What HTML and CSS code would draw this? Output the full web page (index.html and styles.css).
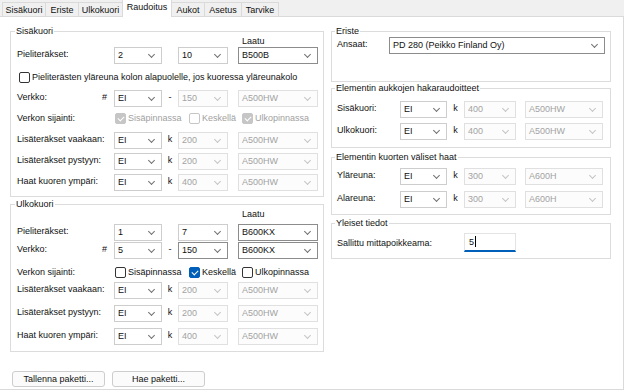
FILE: index.html
```html
<!DOCTYPE html>
<html lang="fi">
  <head>
    <meta charset="UTF-8" />
    <title>Raudoitus</title>
    <link rel="stylesheet" href="styles.css">
  </head>
  <body>
    <div class="tabs">
      <div class="tab">Sisäkuori</div>
      <div class="tab">Eriste</div>
      <div class="tab">Ulkokuori</div>
      <div class="tab active">Raudoitus</div>
      <div class="tab">Aukot</div>
      <div class="tab">Asetus</div>
      <div class="tab">Tarvike</div>
    </div>

    <div class="panel">
      <!-- left column: inner and outer shell -->
      <div class="col-left">
        <fieldset class="group sisa">
          <legend>Sisäkuori</legend>
          <div class="row laatu-row"><span class="laatu">Laatu</span></div>
          <div class="row r-piel">
            <span class="label">Pieliteräkset:</span><span class="mark"></span>
            <div class="combo c1">2</div><span class="sep"></span>
            <div class="combo c2">10</div>
            <div class="combo c3 dark">B500B</div>
          </div>
          <div class="row check-row">
            <span class="box"></span>
            <span class="check-text">Pieliterästen yläreuna kolon alapuolelle, jos kuoressa yläreunakolo</span>
          </div>
          <div class="row r-verkko">
            <span class="label">Verkko:</span><span class="mark">#</span>
            <div class="combo c1">EI</div><span class="sep">-</span>
            <div class="combo c2 off">150</div>
            <div class="combo c3 off">A500HW</div>
          </div>
          <div class="row place-row">
            <span class="label wide">Verkon sijainti:</span>
            <span class="opt o1 dis"><span class="box dis on"></span>Sisäpinnassa</span>
            <span class="opt o2 dis"><span class="box dis"></span>Keskellä</span>
            <span class="opt o3 dis"><span class="box dis on"></span>Ulkopinnassa</span>
          </div>
          <div class="row r-extra">
            <span class="label">Lisäteräkset vaakaan:</span><span class="mark"></span>
            <div class="combo c1">EI</div><span class="sep">k</span>
            <div class="combo c2 off">200</div>
            <div class="combo c3 off">A500HW</div>
          </div>
          <div class="row r-extra2">
            <span class="label">Lisäteräkset pystyyn:</span><span class="mark"></span>
            <div class="combo c1">EI</div><span class="sep">k</span>
            <div class="combo c2 off">200</div>
            <div class="combo c3 off">A500HW</div>
          </div>
          <div class="row r-extra2">
            <span class="label">Haat kuoren ympäri:</span><span class="mark"></span>
            <div class="combo c1">EI</div><span class="sep">k</span>
            <div class="combo c2 off">400</div>
            <div class="combo c3 off">A500HW</div>
          </div>
        </fieldset>

        <fieldset class="group ulko">
          <legend>Ulkokuori</legend>
          <div class="row laatu-row"><span class="laatu">Laatu</span></div>
          <div class="row u-piel">
            <span class="label">Pieliteräkset:</span><span class="mark"></span>
            <div class="combo c1">1</div><span class="sep"></span>
            <div class="combo c2">7</div>
            <div class="combo c3 dark">B600KX</div>
          </div>
          <div class="row u-verkko">
            <span class="label">Verkko:</span><span class="mark">#</span>
            <div class="combo c1">5</div><span class="sep">-</span>
            <div class="combo c2 dark">150</div>
            <div class="combo c3 dark">B600KX</div>
          </div>
          <div class="row place-row u-place">
            <span class="label wide">Verkon sijainti:</span>
            <span class="opt o1"><span class="box"></span>Sisäpinnassa</span>
            <span class="opt o2"><span class="box on"></span>Keskellä</span>
            <span class="opt o3"><span class="box"></span>Ulkopinnassa</span>
          </div>
          <div class="row u-extra">
            <span class="label">Lisäteräkset vaakaan:</span><span class="mark"></span>
            <div class="combo c1">EI</div><span class="sep">k</span>
            <div class="combo c2 off">200</div>
            <div class="combo c3 off">A500HW</div>
          </div>
          <div class="row u-extra2">
            <span class="label">Lisäteräkset pystyyn:</span><span class="mark"></span>
            <div class="combo c1">EI</div><span class="sep">k</span>
            <div class="combo c2 off">200</div>
            <div class="combo c3 off">A500HW</div>
          </div>
          <div class="row u-extra2">
            <span class="label">Haat kuoren ympäri:</span><span class="mark"></span>
            <div class="combo c1">EI</div><span class="sep">k</span>
            <div class="combo c2 off">400</div>
            <div class="combo c3 off">A500HW</div>
          </div>
        </fieldset>

        <div class="buttons">
          <div class="btn">Tallenna paketti...</div>
          <div class="btn">Hae paketti...</div>
        </div>
      </div>

      <!-- right column -->
      <div class="col-right">
        <fieldset class="group eriste">
          <legend>Eriste</legend>
          <div class="row e-row">
            <span class="label">Ansaat:</span>
            <div class="combo wide-combo dark">PD 280 (Peikko Finland Oy)</div>
          </div>
        </fieldset>

        <fieldset class="group aukot">
          <legend>Elementin aukkojen hakaraudoitteet</legend>
          <div class="row a-row1">
            <span class="label">Sisäkuori:</span>
            <div class="combo c1">EI</div><span class="sep">k</span>
            <div class="combo c2 off">400</div>
            <div class="combo c3 off">A500HW</div>
          </div>
          <div class="row a-row2">
            <span class="label">Ulkokuori:</span>
            <div class="combo c1">EI</div><span class="sep">k</span>
            <div class="combo c2 off">400</div>
            <div class="combo c3 off">A500HW</div>
          </div>
        </fieldset>

        <fieldset class="group haat">
          <legend>Elementin kuorten väliset haat</legend>
          <div class="row h-row">
            <span class="label">Yläreuna:</span>
            <div class="combo c1">EI</div><span class="sep">k</span>
            <div class="combo c2 off">300</div>
            <div class="combo c3 off">A600H</div>
          </div>
          <div class="row h-row">
            <span class="label">Alareuna:</span>
            <div class="combo c1">EI</div><span class="sep">k</span>
            <div class="combo c2 off">300</div>
            <div class="combo c3 off">A600H</div>
          </div>
        </fieldset>

        <fieldset class="group yleiset">
          <legend>Yleiset tiedot</legend>
          <div class="row y-row">
            <span class="label">Sallittu mittapoikkeama:</span>
            <div class="field">5<span class="caret"></span></div>
          </div>
        </fieldset>
      </div>
    </div>
  </body>
</html>
```

FILE: styles.css
```css
* {
  box-sizing: border-box;
}
body {
  margin: 0;
  width: 624px;
  height: 390px;
  overflow: hidden;
  background: #fff;
  font-family: "Liberation Sans", Arial, sans-serif;
  font-size: 9px;
  color: #111;
}

/* tab strip */
.tabs {
  display: flex;
  align-items: flex-end;
  height: 17px;
  padding-left: 2px;
  background: #f0f0f0;
  border-bottom: 1px solid #dadada;
}
.tab {
  height: 15px;
  margin-bottom: -1px;
  margin-right: -1px;
  line-height: 14px;
  text-align: center;
  border: 1px solid #dadada;
  background: #f0f0f0;
}
.tab:nth-child(1) { width: 44px; }
.tab:nth-child(2) { width: 34px; }
.tab:nth-child(3) { width: 45px; }
.tab:nth-child(4) { width: 50px; }
.tab:nth-child(5) { width: 34px; }
.tab:nth-child(6) { width: 38px; }
.tab:nth-child(7) { width: 38px; }
.tab.active {
  height: 18px;
  background: #fff;
  border-bottom: none;
}

.panel {
  display: flex;
  height: 373px;
  padding: 9px 0 0 10px;
  border-right: 1px solid #dadada;
  border-bottom: 1px solid #dadada;
}
.col-left {
  width: 314px;
}
.col-right {
  width: 280px;
  margin-left: 7px;
}

/* group boxes */
.group {
  margin: 0;
  min-width: 0;
  padding: 0 5px 5px 6px;
  border: 1px solid #dcdcdc;
}
.group legend {
  margin-left: -2px;
  padding: 0 1px;
  line-height: 10px;
  height: 10px;
}
.col-right .group {
  padding-left: 5px;
}
.ulko {
  margin-top: 2px;
  padding-bottom: 6px;
}

.row {
  display: flex;
  align-items: center;
  height: 17px;
}
.label {
  align-self: flex-start;
  width: 82px;
  padding-top: 1px;
  line-height: 12px;
  white-space: nowrap;
}
.label.wide {
  width: 97px;
  align-self: center;
  padding-top: 0;
}
.mark,
.sep {
  align-self: flex-start;
  line-height: 12px;
  padding-top: 1px;
  text-align: center;
  color: #111;
}
.mark {
  width: 15px;
  padding-right: 4px;
}
.sep {
  width: 16px;
}

/* row spacing, left column */
.laatu-row {
  height: 10px;
}
.laatu {
  margin-left: 225px;
  line-height: 10px;
}
.r-piel {
  margin-top: 1px;
}
.check-row {
  height: 14px;
  margin-top: 6px;
}
.check-row .box {
  margin-left: 2px;
  margin-right: 2px;
}
.r-verkko {
  margin-top: 6px;
}
.place-row {
  height: 14px;
  margin-top: 4px;
}
.r-extra {
  margin-top: 7px;
}
.r-extra2 {
  margin-top: 4px;
}
.u-piel {
  margin-top: 5px;
}
.u-verkko {
  margin-top: 1px;
}
.u-place {
  margin-top: 6px;
}
.u-extra {
  margin-top: 3px;
}
.u-extra2 {
  margin-top: 6px;
}

/* combo boxes */
.combo {
  position: relative;
  height: 17px;
  padding-left: 3px;
  line-height: 15px;
  border: 1px solid #cdcdcd;
  background: #fff;
  white-space: nowrap;
}
.combo::after {
  content: "";
  position: absolute;
  right: 7px;
  top: 4px;
  width: 4px;
  height: 4px;
  border-right: 1px solid #707070;
  border-bottom: 1px solid #707070;
  transform: rotate(45deg);
}
.combo.dark {
  border-color: #8c8c8c;
}
.combo.off {
  color: #a3a3a3;
  border-color: #e0e0e0;
  background: #fcfcfc;
}
.combo.off::after {
  border-color: #c4c4c4;
}
.c1 {
  width: 48px;
}
.c2 {
  width: 50px;
}
.c3 {
  width: 80px;
  margin-left: 10px;
}

/* check boxes */
.box {
  position: relative;
  flex: none;
  width: 11px;
  height: 11px;
  border: 1px solid #333;
  border-radius: 2px;
  background: #fff;
}
.box.on {
  background: #005fb8;
  border-color: #005fb8;
}
.box.on::after {
  content: "";
  position: absolute;
  left: 3px;
  top: 1px;
  width: 3px;
  height: 5px;
  border-right: 1px solid #fff;
  border-bottom: 1px solid #fff;
  transform: rotate(45deg);
}
.box.dis {
  border-color: #c6c6c6;
}
.box.dis.on {
  background: #c6c6c6;
}
.opt {
  display: flex;
  align-items: center;
  gap: 2px;
  white-space: nowrap;
}
.opt.dis {
  color: #9f9f9f;
}
.o1 {
  width: 74px;
  margin-left: 1px;
}
.o2 {
  width: 53px;
}

/* right column */
.col-right .label {
  width: 63px;
}
.col-right .c1 {
  width: 47px;
}
.col-right .sep {
  width: 17px;
}
.col-right .c2 {
  width: 52px;
}
.col-right .c3 {
  width: 78px;
  margin-left: 9px;
}
.eriste {
  padding-bottom: 27px;
}
.eriste .label {
  width: 52px;
}
.e-row {
  margin-top: 1px;
}
.wide-combo {
  width: 216px;
}
.aukot {
  margin-top: 1px;
  padding-bottom: 7px;
}
.a-row1 {
  margin-top: 8px;
}
.a-row2 {
  margin-top: 5px;
}
.haat {
  margin-top: 4px;
  padding-bottom: 6px;
}
.h-row {
  margin-top: 6px;
}
.yleiset {
  margin-top: 3px;
  padding-bottom: 6px;
}
.y-row {
  height: 19px;
  margin-top: 5px;
}
.yleiset .label {
  width: 127px;
  align-self: center;
  padding-top: 0;
}
.field {
  width: 52px;
  height: 19px;
  padding-left: 4px;
  line-height: 17px;
  border: 1px solid #e3e3e3;
  border-bottom: 2px solid #005fb8;
}
.caret {
  display: inline-block;
  width: 1px;
  height: 11px;
  margin-left: 1px;
  background: #000;
  vertical-align: -2px;
}

/* buttons */
.buttons {
  display: flex;
  gap: 7px;
  margin-top: 19px;
  padding-left: 2px;
}
.btn {
  width: 93px;
  height: 16px;
  line-height: 14px;
  text-align: center;
  border: 1px solid #cdcdcd;
  border-radius: 3px;
  background: #fbfbfb;
}
```
